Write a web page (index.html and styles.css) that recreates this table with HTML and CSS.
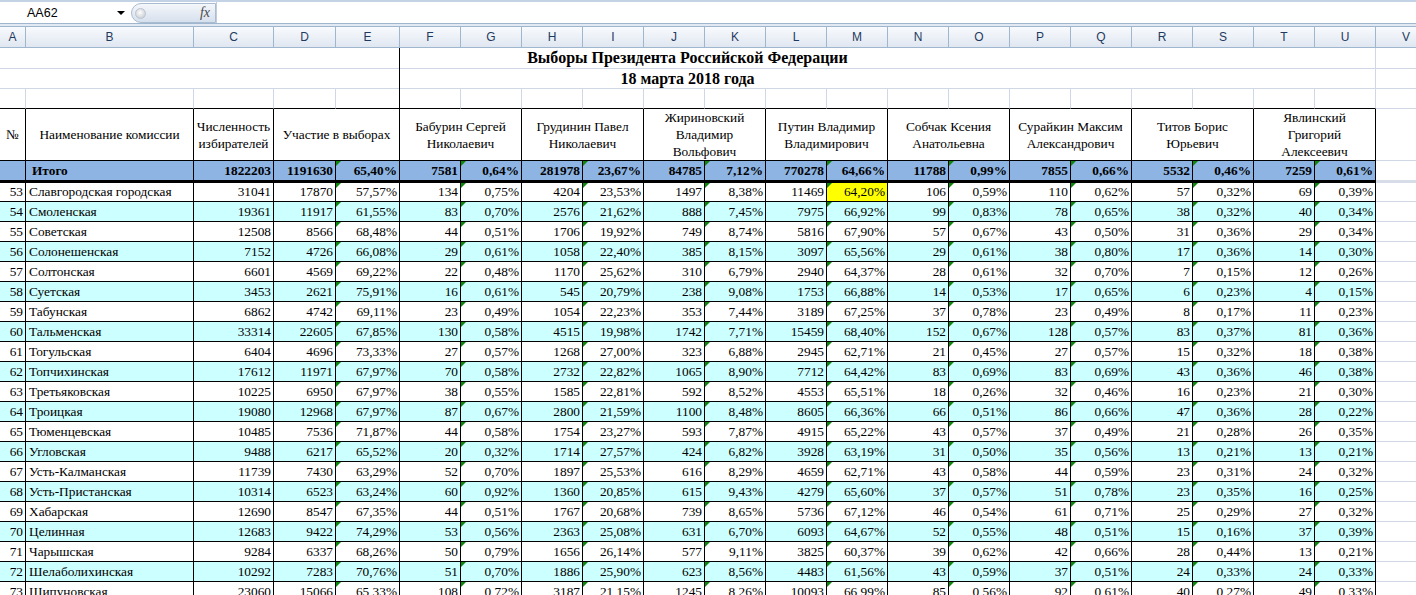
FILE: index.html
```html
<!DOCTYPE html>
<html lang="ru">
<head>
<meta charset="utf-8">
<title>Выборы Президента Российской Федерации</title>
<link rel="stylesheet" href="styles.css">
</head>
<body>
<div class="fbar">
  <div class="namebox"><span class="ref">AA62</span><span class="dd"></span></div>
  <div class="pill"><span class="knob"></span><span class="fx">fx</span></div>
  <div class="formula"></div>
</div>
<div class="sep"></div>
<div class="sheet">
  <div class="grid ch"><span>A</span><span>B</span><span>C</span><span>D</span><span>E</span><span>F</span><span>G</span><span>H</span><span>I</span><span>J</span><span>K</span><span>L</span><span>M</span><span>N</span><span>O</span><span>P</span><span>Q</span><span>R</span><span>S</span><span>T</span><span>U</span><span>V</span></div>
  <div class="grid r1"><span class="title">Выборы Президента Российской Федерации</span><span class="v"></span></div>
  <div class="grid r2"><span class="title">18 марта 2018 года</span><span class="v"></span></div>
  <div class="grid r3"><span></span><span></span><span></span><span></span><span></span><span></span><span></span><span></span><span></span><span></span><span></span><span></span><span></span><span></span><span></span><span></span><span></span><span></span><span></span><span></span><span></span><span class="v"></span></div>
  <div class="grid hdr">
    <span><span class="w">№</span></span>
    <span><span class="w">Наименование комиссии</span></span>
    <span><span class="w">Численность<br>избирателей</span></span>
    <span class="s2"><span class="w">Участие в выборах</span></span>
    <span class="s2"><span class="w">Бабурин Сергей<br>Николаевич</span></span>
    <span class="s2"><span class="w">Грудинин Павел<br>Николаевич</span></span>
    <span class="s2"><span class="w">Жириновский<br>Владимир<br>Вольфович</span></span>
    <span class="s2"><span class="w">Путин Владимир<br>Владимирович</span></span>
    <span class="s2"><span class="w">Собчак Ксения<br>Анатольевна</span></span>
    <span class="s2"><span class="w">Сурайкин Максим<br>Александрович</span></span>
    <span class="s2"><span class="w">Титов Борис<br>Юрьевич</span></span>
    <span class="s2"><span class="w">Явлинский<br>Григорий<br>Алексеевич</span></span>
    <span class="v"></span>
  </div>
  <div class="grid tot"><span></span><span class="t">Итого</span><span>1822203</span><span>1191630</span><span class="p">65,40%</span><span>7581</span><span class="p">0,64%</span><span>281978</span><span class="p">23,67%</span><span>84785</span><span class="p">7,12%</span><span>770278</span><span class="p">64,66%</span><span>11788</span><span class="p">0,99%</span><span>7855</span><span class="p">0,66%</span><span>5532</span><span class="p">0,46%</span><span>7259</span><span class="p">0,61%</span><span class="v"></span></div>

  <div class="grid dat first"><span>53</span><span class="t">Славгородская городская</span><span>31041</span><span>17870</span><span class="p">57,57%</span><span>134</span><span class="p">0,75%</span><span>4204</span><span class="p">23,53%</span><span>1497</span><span class="p">8,38%</span><span>11469</span><span class="p y">64,20%</span><span>106</span><span class="p">0,59%</span><span>110</span><span class="p">0,62%</span><span>57</span><span class="p">0,32%</span><span>69</span><span class="p">0,39%</span><span class="v"></span></div>
  <div class="grid dat e"><span>54</span><span class="t">Смоленская</span><span>19361</span><span>11917</span><span class="p">61,55%</span><span>83</span><span class="p">0,70%</span><span>2576</span><span class="p">21,62%</span><span>888</span><span class="p">7,45%</span><span>7975</span><span class="p">66,92%</span><span>99</span><span class="p">0,83%</span><span>78</span><span class="p">0,65%</span><span>38</span><span class="p">0,32%</span><span>40</span><span class="p">0,34%</span><span class="v"></span></div>
  <div class="grid dat"><span>55</span><span class="t">Советская</span><span>12508</span><span>8566</span><span class="p">68,48%</span><span>44</span><span class="p">0,51%</span><span>1706</span><span class="p">19,92%</span><span>749</span><span class="p">8,74%</span><span>5816</span><span class="p">67,90%</span><span>57</span><span class="p">0,67%</span><span>43</span><span class="p">0,50%</span><span>31</span><span class="p">0,36%</span><span>29</span><span class="p">0,34%</span><span class="v"></span></div>
  <div class="grid dat e"><span>56</span><span class="t">Солонешенская</span><span>7152</span><span>4726</span><span class="p">66,08%</span><span>29</span><span class="p">0,61%</span><span>1058</span><span class="p">22,40%</span><span>385</span><span class="p">8,15%</span><span>3097</span><span class="p">65,56%</span><span>29</span><span class="p">0,61%</span><span>38</span><span class="p">0,80%</span><span>17</span><span class="p">0,36%</span><span>14</span><span class="p">0,30%</span><span class="v"></span></div>
  <div class="grid dat"><span>57</span><span class="t">Солтонская</span><span>6601</span><span>4569</span><span class="p">69,22%</span><span>22</span><span class="p">0,48%</span><span>1170</span><span class="p">25,62%</span><span>310</span><span class="p">6,79%</span><span>2940</span><span class="p">64,37%</span><span>28</span><span class="p">0,61%</span><span>32</span><span class="p">0,70%</span><span>7</span><span class="p">0,15%</span><span>12</span><span class="p">0,26%</span><span class="v"></span></div>
  <div class="grid dat e"><span>58</span><span class="t">Суетская</span><span>3453</span><span>2621</span><span class="p">75,91%</span><span>16</span><span class="p">0,61%</span><span>545</span><span class="p">20,79%</span><span>238</span><span class="p">9,08%</span><span>1753</span><span class="p">66,88%</span><span>14</span><span class="p">0,53%</span><span>17</span><span class="p">0,65%</span><span>6</span><span class="p">0,23%</span><span>4</span><span class="p">0,15%</span><span class="v"></span></div>
  <div class="grid dat"><span>59</span><span class="t">Табунская</span><span>6862</span><span>4742</span><span class="p">69,11%</span><span>23</span><span class="p">0,49%</span><span>1054</span><span class="p">22,23%</span><span>353</span><span class="p">7,44%</span><span>3189</span><span class="p">67,25%</span><span>37</span><span class="p">0,78%</span><span>23</span><span class="p">0,49%</span><span>8</span><span class="p">0,17%</span><span>11</span><span class="p">0,23%</span><span class="v"></span></div>
  <div class="grid dat e"><span>60</span><span class="t">Тальменская</span><span>33314</span><span>22605</span><span class="p">67,85%</span><span>130</span><span class="p">0,58%</span><span>4515</span><span class="p">19,98%</span><span>1742</span><span class="p">7,71%</span><span>15459</span><span class="p">68,40%</span><span>152</span><span class="p">0,67%</span><span>128</span><span class="p">0,57%</span><span>83</span><span class="p">0,37%</span><span>81</span><span class="p">0,36%</span><span class="v"></span></div>
  <div class="grid dat"><span>61</span><span class="t">Тогульская</span><span>6404</span><span>4696</span><span class="p">73,33%</span><span>27</span><span class="p">0,57%</span><span>1268</span><span class="p">27,00%</span><span>323</span><span class="p">6,88%</span><span>2945</span><span class="p">62,71%</span><span>21</span><span class="p">0,45%</span><span>27</span><span class="p">0,57%</span><span>15</span><span class="p">0,32%</span><span>18</span><span class="p">0,38%</span><span class="v"></span></div>
  <div class="grid dat e"><span>62</span><span class="t">Топчихинская</span><span>17612</span><span>11971</span><span class="p">67,97%</span><span>70</span><span class="p">0,58%</span><span>2732</span><span class="p">22,82%</span><span>1065</span><span class="p">8,90%</span><span>7712</span><span class="p">64,42%</span><span>83</span><span class="p">0,69%</span><span>83</span><span class="p">0,69%</span><span>43</span><span class="p">0,36%</span><span>46</span><span class="p">0,38%</span><span class="v"></span></div>
  <div class="grid dat"><span>63</span><span class="t">Третьяковская</span><span>10225</span><span>6950</span><span class="p">67,97%</span><span>38</span><span class="p">0,55%</span><span>1585</span><span class="p">22,81%</span><span>592</span><span class="p">8,52%</span><span>4553</span><span class="p">65,51%</span><span>18</span><span class="p">0,26%</span><span>32</span><span class="p">0,46%</span><span>16</span><span class="p">0,23%</span><span>21</span><span class="p">0,30%</span><span class="v"></span></div>
  <div class="grid dat e"><span>64</span><span class="t">Троицкая</span><span>19080</span><span>12968</span><span class="p">67,97%</span><span>87</span><span class="p">0,67%</span><span>2800</span><span class="p">21,59%</span><span>1100</span><span class="p">8,48%</span><span>8605</span><span class="p">66,36%</span><span>66</span><span class="p">0,51%</span><span>86</span><span class="p">0,66%</span><span>47</span><span class="p">0,36%</span><span>28</span><span class="p">0,22%</span><span class="v"></span></div>
  <div class="grid dat"><span>65</span><span class="t">Тюменцевская</span><span>10485</span><span>7536</span><span class="p">71,87%</span><span>44</span><span class="p">0,58%</span><span>1754</span><span class="p">23,27%</span><span>593</span><span class="p">7,87%</span><span>4915</span><span class="p">65,22%</span><span>43</span><span class="p">0,57%</span><span>37</span><span class="p">0,49%</span><span>21</span><span class="p">0,28%</span><span>26</span><span class="p">0,35%</span><span class="v"></span></div>
  <div class="grid dat e"><span>66</span><span class="t">Угловская</span><span>9488</span><span>6217</span><span class="p">65,52%</span><span>20</span><span class="p">0,32%</span><span>1714</span><span class="p">27,57%</span><span>424</span><span class="p">6,82%</span><span>3928</span><span class="p">63,19%</span><span>31</span><span class="p">0,50%</span><span>35</span><span class="p">0,56%</span><span>13</span><span class="p">0,21%</span><span>13</span><span class="p">0,21%</span><span class="v"></span></div>
  <div class="grid dat"><span>67</span><span class="t">Усть-Калманская</span><span>11739</span><span>7430</span><span class="p">63,29%</span><span>52</span><span class="p">0,70%</span><span>1897</span><span class="p">25,53%</span><span>616</span><span class="p">8,29%</span><span>4659</span><span class="p">62,71%</span><span>43</span><span class="p">0,58%</span><span>44</span><span class="p">0,59%</span><span>23</span><span class="p">0,31%</span><span>24</span><span class="p">0,32%</span><span class="v"></span></div>
  <div class="grid dat e"><span>68</span><span class="t">Усть-Пристанская</span><span>10314</span><span>6523</span><span class="p">63,24%</span><span>60</span><span class="p">0,92%</span><span>1360</span><span class="p">20,85%</span><span>615</span><span class="p">9,43%</span><span>4279</span><span class="p">65,60%</span><span>37</span><span class="p">0,57%</span><span>51</span><span class="p">0,78%</span><span>23</span><span class="p">0,35%</span><span>16</span><span class="p">0,25%</span><span class="v"></span></div>
  <div class="grid dat"><span>69</span><span class="t">Хабарская</span><span>12690</span><span>8547</span><span class="p">67,35%</span><span>44</span><span class="p">0,51%</span><span>1767</span><span class="p">20,68%</span><span>739</span><span class="p">8,65%</span><span>5736</span><span class="p">67,12%</span><span>46</span><span class="p">0,54%</span><span>61</span><span class="p">0,71%</span><span>25</span><span class="p">0,29%</span><span>27</span><span class="p">0,32%</span><span class="v"></span></div>
  <div class="grid dat e"><span>70</span><span class="t">Целинная</span><span>12683</span><span>9422</span><span class="p">74,29%</span><span>53</span><span class="p">0,56%</span><span>2363</span><span class="p">25,08%</span><span>631</span><span class="p">6,70%</span><span>6093</span><span class="p">64,67%</span><span>52</span><span class="p">0,55%</span><span>48</span><span class="p">0,51%</span><span>15</span><span class="p">0,16%</span><span>37</span><span class="p">0,39%</span><span class="v"></span></div>
  <div class="grid dat"><span>71</span><span class="t">Чарышская</span><span>9284</span><span>6337</span><span class="p">68,26%</span><span>50</span><span class="p">0,79%</span><span>1656</span><span class="p">26,14%</span><span>577</span><span class="p">9,11%</span><span>3825</span><span class="p">60,37%</span><span>39</span><span class="p">0,62%</span><span>42</span><span class="p">0,66%</span><span>28</span><span class="p">0,44%</span><span>13</span><span class="p">0,21%</span><span class="v"></span></div>
  <div class="grid dat e"><span>72</span><span class="t">Шелаболихинская</span><span>10292</span><span>7283</span><span class="p">70,76%</span><span>51</span><span class="p">0,70%</span><span>1886</span><span class="p">25,90%</span><span>623</span><span class="p">8,56%</span><span>4483</span><span class="p">61,56%</span><span>43</span><span class="p">0,59%</span><span>37</span><span class="p">0,51%</span><span>24</span><span class="p">0,33%</span><span>24</span><span class="p">0,33%</span><span class="v"></span></div>
  <div class="grid dat"><span>73</span><span class="t">Шипуновская</span><span>23060</span><span>15066</span><span class="p">65,33%</span><span>108</span><span class="p">0,72%</span><span>3187</span><span class="p">21,15%</span><span>1245</span><span class="p">8,26%</span><span>10093</span><span class="p">66,99%</span><span>85</span><span class="p">0,56%</span><span>92</span><span class="p">0,61%</span><span>40</span><span class="p">0,27%</span><span>49</span><span class="p">0,33%</span><span class="v"></span></div>
</div>
<div class="freeze"></div>
</body>
</html>
```

FILE: styles.css
```css
* { box-sizing: border-box; margin: 0; padding: 0; }
html, body { width: 1416px; height: 595px; overflow: hidden; background: #fff; }
body {
  position: relative;
  font-family: "Liberation Serif", "Times New Roman", serif;
  font-size: 13.33px;
  color: #000;
}

/* formula bar */
.fbar { height: 23px; border-top: 2px solid #c3d2e4; display: flex; background: #fff; }
.namebox {
  width: 131px; display: flex; align-items: center;
  padding-left: 27px; padding-right: 6px;
  font-family: "Liberation Sans", Arial, sans-serif; font-size: 12.5px;
}
.ref { flex: 1; }
.dd { width: 0; height: 0; border-left: 4px solid transparent; border-right: 4px solid transparent; border-top: 4px solid #000; }
.pill {
  width: 85px; margin-top: 1px;
  border: 1px solid #a9bcd2; border-radius: 10px 0 0 10px;
  background: linear-gradient(#f4f7fb, #d6e0ed);
  display: flex; align-items: center; justify-content: space-between;
  padding: 0 5px 0 3px;
}
.knob {
  width: 11px; height: 11px; border-radius: 50%;
  border: 1px solid #bcc4cf;
  background: radial-gradient(circle at 45% 40%, #fdfdfd, #bfc4cb);
}
.fx { font-family: "Liberation Serif", serif; font-style: italic; font-size: 14px; color: #4a4a4a; }
.formula { flex: 1; border-left: 1px solid #c0cddd; }
.sep { height: 4px; border-top: 1px solid #9eb6ce; border-bottom: 1px solid #9eb6ce; background: #e2e9f3; }

/* grid */
.grid { display: grid; grid-template-columns: 26px 168px 80px 62px 64px repeat(17, 61px); }
.grid > span {
  border-right: 1px solid #d0d7e5; border-bottom: 1px solid #d0d7e5;
  display: flex; align-items: center; white-space: nowrap; overflow: hidden;
}

/* column headers */
.ch > span {
  height: 21px; justify-content: center;
  background: linear-gradient(#f8fafd, #e0e7f1);
  border-color: #9eb6ce;
  color: #1f3a60;
  font-family: "Liberation Sans", Arial, sans-serif; font-size: 12px;
}

/* top rows */
.r1 > span { height: 21px; }
.r2 > span, .r3 > span { height: 20px; }
.title { grid-column: 1 / 22; justify-content: center; font-weight: bold; font-size: 16px; }
.r3 > span { border-bottom-color: #000; }
.r3 > .v { border-bottom-color: #d0d7e5; }

/* table header */
.hdr > span {
  height: 52px; border-color: #000;
  justify-content: center; text-align: center; line-height: 17px;
}
.hdr > .v { border-color: #d0d7e5; }
.hdr .w { display: block; }
.s2 { grid-column: span 2; }

/* totals */
.tot > span {
  height: 22px; background: #8db4e2;
  border-right-color: #000; border-bottom: 3px solid #000;
  font-weight: bold; justify-content: flex-end; padding-right: 2px;
}
.tot > .t { justify-content: flex-start; padding-left: 6px; }
.tot > .v { background: #fff; border-bottom-color: #d6dde8; border-right-color: #d0d7e5; }

/* data */
.dat > span { height: 20px; border-color: #000; justify-content: flex-end; padding-right: 2px; }
.dat.first > span { height: 19px; }
.dat.e > span { background: #ccffff; }
.dat > .t { justify-content: flex-start; padding-left: 3px; }
.dat > span.v { background: #fff; border-color: #d0d7e5; }
.dat > span.y { background: #ffff00; }

.p { position: relative; }
.p::before {
  content: ""; position: absolute; left: 0; top: 0;
  border-top: 5px solid #0c870c; border-right: 5px solid transparent;
}

.freeze { position: absolute; left: 399px; top: 48px; bottom: 0; width: 1px; background: #000; }
```
